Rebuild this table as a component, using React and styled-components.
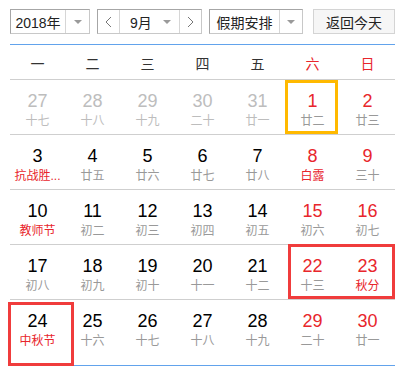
import React from "react";
import styled, { createGlobalStyle, css } from "styled-components";

const GlobalStyle = createGlobalStyle`
  html, body {
    margin: 0;
    padding: 0;
    background: #fff;
    font-family: "Liberation Sans", "Noto Sans CJK SC", sans-serif;
  }
`;

const RED = "#e8262c";
const CJK = `"Liberation Sans", "Noto Sans CJK SC", sans-serif`;

const weekdays = ["一", "二", "三", "四", "五", "六", "日"];

// o: 非本月, f: 节日节气, m: 标记框
const rows = [
  [
    { d: 27, l: "十七", o: true },
    { d: 28, l: "十八", o: true },
    { d: 29, l: "十九", o: true },
    { d: 30, l: "二十", o: true },
    { d: 31, l: "廿一", o: true },
    { d: 1, l: "廿二", m: "today" },
    { d: 2, l: "廿三" },
  ],
  [
    { d: 3, l: "抗战胜...", f: true },
    { d: 4, l: "廿五" },
    { d: 5, l: "廿六" },
    { d: 6, l: "廿七" },
    { d: 7, l: "廿八" },
    { d: 8, l: "白露", f: true },
    { d: 9, l: "三十" },
  ],
  [
    { d: 10, l: "教师节", f: true },
    { d: 11, l: "初二" },
    { d: 12, l: "初三" },
    { d: 13, l: "初四" },
    { d: 14, l: "初五" },
    { d: 15, l: "初六" },
    { d: 16, l: "初七" },
  ],
  [
    { d: 17, l: "初八" },
    { d: 18, l: "初九" },
    { d: 19, l: "初十" },
    { d: 20, l: "十一" },
    { d: 21, l: "十二" },
    { d: 22, l: "十三", m: "range" },
    { d: 23, l: "秋分", f: true },
  ],
  [
    { d: 24, l: "中秋节", f: true, m: "pick" },
    { d: 25, l: "十六" },
    { d: 26, l: "十七" },
    { d: 27, l: "十八" },
    { d: 28, l: "十九" },
    { d: 29, l: "二十" },
    { d: 30, l: "廿一" },
  ],
];

const Caret = () => (
  <svg width="8" height="4" viewBox="0 0 8 4">
    <path d="M0 0 H8 L4 4 Z" fill="#9a9a9a" />
  </svg>
);

const Chevron = ({ dir }) => (
  <svg width="7" height="12" viewBox="0 0 7 12">
    <path
      d={dir === "left" ? "M6 1 L1 6 L6 11" : "M1 1 L6 6 L1 11"}
      fill="none"
      stroke="#777"
      strokeWidth="1"
    />
  </svg>
);

const App = () => {
  return (
    <S.Page>
      <GlobalStyle />
      <S.Toolbar>
        <S.Select $w={80}>
          <S.Value $w={55}>2018年</S.Value>
          <S.Drop>
            <Caret />
          </S.Drop>
        </S.Select>
        <S.Select $w={105} $ml={7}>
          <S.Arrow>
            <Chevron dir="left" />
          </S.Arrow>
          <S.MonthBox>
            <span>9月</span>
            <Caret />
          </S.MonthBox>
          <S.Arrow $last>
            <Chevron dir="right" />
          </S.Arrow>
        </S.Select>
        <S.Select $w={94} $ml={7}>
          <S.Value $w={70}>假期安排</S.Value>
          <S.Drop>
            <Caret />
          </S.Drop>
        </S.Select>
        <S.TodayBtn>返回今天</S.TodayBtn>
      </S.Toolbar>

      <S.Calendar>
        <S.Head>
          {weekdays.map((w, i) => (
            <S.Weekday key={w} $red={i > 4}>
              {w}
            </S.Weekday>
          ))}
        </S.Head>
        {rows.map((row, ri) => (
          <S.Row key={ri} $last={ri === rows.length - 1}>
            {row.map((c, ci) => (
              <S.Cell key={ci} $mark={c.m}>
                <S.Num $other={c.o} $red={!c.o && ci > 4}>
                  {c.d}
                </S.Num>
                <S.Lunar $other={c.o} $fest={c.f}>
                  {c.l}
                </S.Lunar>
              </S.Cell>
            ))}
          </S.Row>
        ))}
      </S.Calendar>
    </S.Page>
  );
};

const S = {
  Page: styled.div`
    width: 404px;
    height: 366px;
    overflow: hidden;
    padding: 9px 9px 0 10px;
    box-sizing: border-box;
  `,
  Toolbar: styled.div`
    display: flex;
    align-items: center;
    height: 25px;
    margin-bottom: 10px;
  `,
  Select: styled.div`
    display: flex;
    width: ${(p) => p.$w}px;
    height: 25px;
    margin-left: ${(p) => p.$ml || 0}px;
    box-sizing: border-box;
    border: 1px solid;
    border-color: #a6a6a6 #c8c8c8 #c8c8c8 #a6a6a6;
    background: #fff;
    font-family: ${CJK};
    font-size: 14px;
    color: #222;
  `,
  Value: styled.div`
    width: ${(p) => p.$w}px;
    display: flex;
    align-items: center;
    justify-content: center;
    border-right: 1px solid #d6d6d6;
    box-sizing: border-box;
  `,
  Drop: styled.div`
    flex: 1;
    display: flex;
    align-items: center;
    justify-content: center;
  `,
  Arrow: styled.div`
    width: 22px;
    display: flex;
    align-items: center;
    justify-content: center;
    box-sizing: border-box;
    ${(p) =>
      p.$last
        ? css`
            border-left: 1px solid #d6d6d6;
          `
        : css`
            border-right: 1px solid #d6d6d6;
          `}
  `,
  MonthBox: styled.div`
    flex: 1;
    display: flex;
    align-items: center;
    justify-content: space-between;
    padding: 0 8px 0 10px;
  `,
  TodayBtn: styled.div`
    margin-left: 10px;
    width: 82px;
    height: 25px;
    box-sizing: border-box;
    border: 1px solid #d4d4d4;
    background: #f6f6f6;
    display: flex;
    align-items: center;
    justify-content: center;
    font-family: ${CJK};
    font-size: 14px;
    color: #222;
  `,
  Calendar: styled.div`
    width: 385px;
    border-top: 1px solid #62a3ec;
    border-bottom: 1px solid #62a3ec;
  `,
  Head: styled.div`
    display: grid;
    grid-template-columns: repeat(7, 55px);
    height: 34px;
    border-bottom: 1px solid #cfcfcf;
  `,
  Weekday: styled.div`
    display: flex;
    align-items: center;
    justify-content: center;
    padding-top: 1px;
    font-family: ${CJK};
    font-size: 14px;
    color: ${(p) => (p.$red ? RED : "#333")};
  `,
  Row: styled.div`
    display: grid;
    grid-template-columns: repeat(7, 55px);
    height: ${(p) => (p.$last ? 65 : 55)}px;
    box-sizing: border-box;
    border-bottom: ${(p) => (p.$last ? "none" : "1px solid #cfcfcf")};
  `,
  Cell: styled.div`
    position: relative;
    display: flex;
    flex-direction: column;
    align-items: center;
    padding-top: 11px;
    ${(p) =>
      p.$mark === "today" &&
      css`
        &::after {
          content: "";
          position: absolute;
          left: 0;
          top: 0;
          width: 53px;
          bottom: 0;
          border: 3px solid #ffb900;
          box-sizing: border-box;
        }
      `}
    ${(p) =>
      p.$mark === "range" &&
      css`
        &::after {
          content: "";
          position: absolute;
          left: 3px;
          top: -1px;
          width: 107px;
          bottom: 0;
          border: 3px solid #f03c3c;
          box-sizing: border-box;
        }
      `}
    ${(p) =>
      p.$mark === "pick" &&
      css`
        &::after {
          content: "";
          position: absolute;
          left: -2px;
          right: -9px;
          top: 2px;
          bottom: -1px;
          border: 3px solid #f03c3c;
          box-sizing: border-box;
        }
      `}
  `,
  Num: styled.div`
    font-family: "Liberation Sans", Arial, sans-serif;
    font-size: 18px;
    line-height: 20px;
    color: ${(p) => (p.$other ? "#bdbdbd" : p.$red ? RED : "#000")};
  `,
  Lunar: styled.div`
    margin-top: 2px;
    font-family: ${CJK};
    font-size: 12px;
    line-height: 16px;
    white-space: nowrap;
    color: ${(p) => (p.$fest ? RED : p.$other ? "#bdbdbd" : "#999")};
  `,
};

export default App;
